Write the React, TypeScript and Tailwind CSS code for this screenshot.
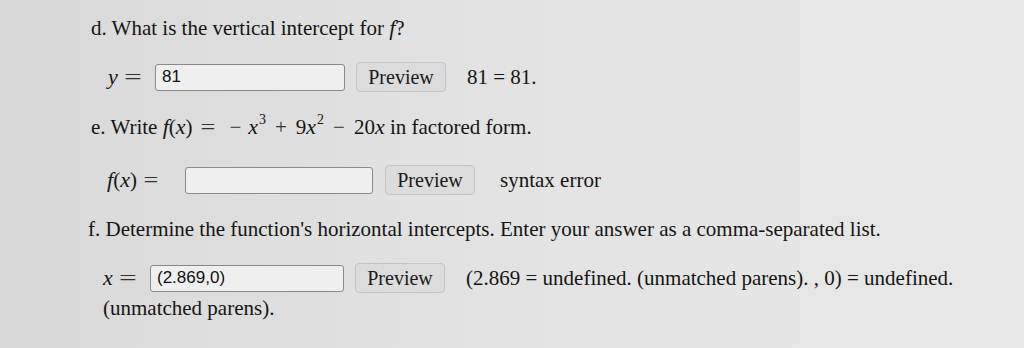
import React from 'react';

const serif = { fontFamily: '"Liberation Serif", "Times New Roman", serif' };

const M = ({ children }: { children: React.ReactNode }) => (
  <span className="italic text-[22px]" style={serif}>{children}</span>
);

// operator with MathJax-like spacing
const Op = ({ children, cls = 'mx-[9px]' }: { children: React.ReactNode; cls?: string }) => (
  <span className={`inline-block ${cls} text-[#333]`}>{children}</span>
);

const Box = ({ value, w }: { value?: string; w: string }) => (
  <div
    className={`${w} h-[27px] flex items-center px-[6px] bg-[#efefef] border border-[#8a8a8a] rounded-[3px] text-[17px] text-[#111]`}
    style={{ fontFamily: '"Liberation Sans", Arial, sans-serif' }}
  >
    {value}
  </div>
);

const PreviewBtn = ({ ml }: { ml: string }) => (
  <div className={`${ml} w-[90px] h-[30px] flex items-center justify-center bg-[#dcdcdc] border border-[#c4c4c4] rounded-[4px] text-[20px] text-[#1a1a1a]`}>
    Preview
  </div>
);

export default function App() {
  return (
    <div
      className="w-[1024px] h-[348px] overflow-hidden bg-gradient-to-r from-[#d9d9d9] via-[#e3e3e3] to-[#e8e8e8] text-[#151515] text-[21px] leading-[24px]"
      style={serif}
    >
      <div className="pl-[91px] pt-[16px] flex flex-col">
        <div>
          d. What is the vertical intercept for <M>f</M>?
        </div>

        <div className="mt-[22px] h-[30px] flex items-center">
          <div className="ml-[17px] w-[47px] whitespace-nowrap">
            <M>y</M>
            <Op cls="ml-[9px] scale-x-150">=</Op>
          </div>
          <Box value="81" w="w-[190px]" />
          <PreviewBtn ml="ml-[11px]" />
          <div className="ml-[21px]">81 = 81.</div>
        </div>

        <div className="mt-[23px] whitespace-nowrap">
          e. Write <M>f</M>(<M>x</M>)
          <Op cls="mx-[9px] scale-x-125">=</Op>
          <Op cls="mx-[7px]">−</Op>
          <M>x</M>
          <sup className="text-[14px] -top-[10px] ml-[1px]">3</sup>
          <Op>+</Op>9<M>x</M>
          <sup className="text-[14px] -top-[10px] ml-[1px]">2</sup>
          <Op>−</Op>20<M>x</M> in factored form.
        </div>

        <div className="mt-[26px] h-[30px] flex items-center">
          <div className="ml-[16px] w-[78px] whitespace-nowrap">
            <M>f</M>(<M>x</M>)
            <Op cls="ml-[8px] scale-x-125">=</Op>
          </div>
          <Box w="w-[188px]" />
          <PreviewBtn ml="ml-[12px]" />
          <div className="ml-[25px]">syntax error</div>
        </div>

        <div className="mt-[22px] -ml-[3px] whitespace-nowrap">
          f. Determine the function's horizontal intercepts. Enter your answer as a comma-separated list.
        </div>

        <div className="mt-[22px] h-[30px] flex items-center">
          <div className="ml-[12px] w-[47px] whitespace-nowrap">
            <M>x</M>
            <Op cls="ml-[9px] scale-x-150">=</Op>
          </div>
          <Box value="(2.869,0)" w="w-[194px]" />
          <PreviewBtn ml="ml-[11px]" />
          <div className="ml-[21px] whitespace-nowrap">
            (2.869 = undefined. (unmatched parens). , 0) = undefined.
          </div>
        </div>
        <div className="mt-[3px] ml-[12px]">(unmatched parens).</div>
      </div>
    </div>
  );
}
